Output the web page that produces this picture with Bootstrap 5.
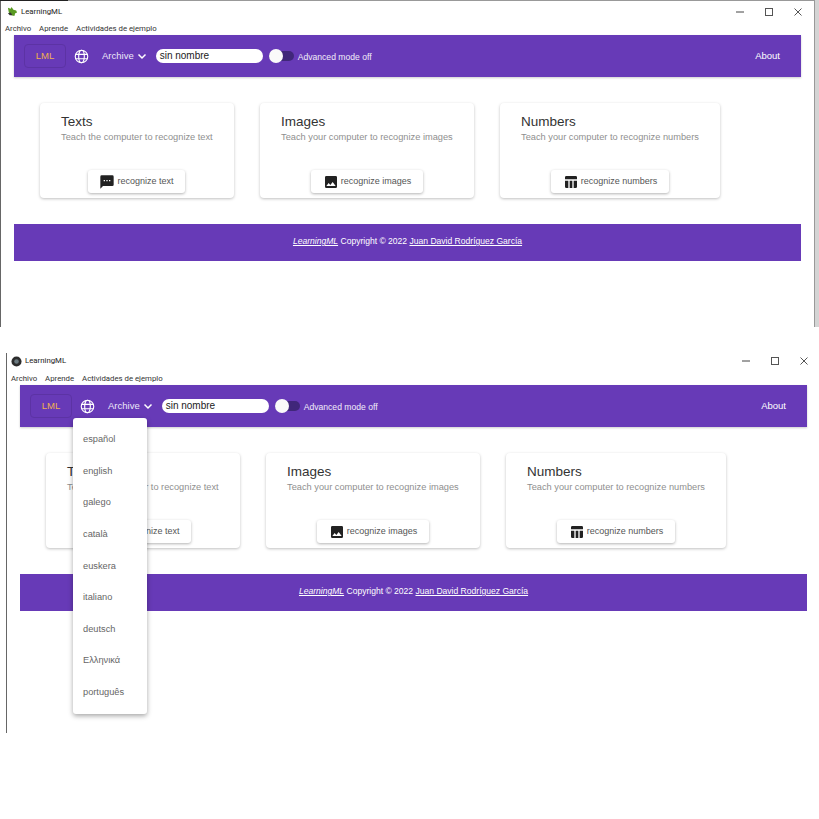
<!DOCTYPE html>
<html lang="en">
<head>
    <meta charset="UTF-8">
    <title>LearningML</title>
    <link href="https://cdn.jsdelivr.net/npm/bootstrap@5.3.0/dist/css/bootstrap.min.css" rel="stylesheet">
    <style>
        body { background: #fff; font-family: "Liberation Sans", Arial, sans-serif; }
        .app-window { position: absolute; background: #fff; width: 813px; }
        .win-first { left: 0; top: 0; height: 327px; width: 815px; border-left: 1px solid #666; border-top: 1px solid #999; border-right: 1px solid #999; box-shadow: 4px 0 0 #d4d4d4; }
        .win-first::before { content: ""; position: absolute; left: -1px; top: -1px; width: 68px; height: 1px; background: #222; }
        .win-second { left: 6px; top: 350px; height: 383px; border-left: 1px solid #666; }
        .win-second::before { content: ""; position: absolute; left: -1px; top: 0; width: 1px; height: 3px; background: #fff; }
        .win-title { height: 22px; padding-left: 4px; font-family: Roboto, sans-serif; font-size: 7.8px; color: #222; }
        .win-first .win-title { height: 21px; padding-left: 6px; }
        .win-icons { gap: 3px; }
        .win-controls { gap: 19px; margin-right: 10px; }
        .win-first .win-controls { margin-right: 11px; }
        .win-menu { height: 13px; padding-left: 4px; gap: 8px; font-family: Roboto, sans-serif; font-size: 7.8px; line-height: 13px; color: #333; }
        .app-bar { margin-left: 13px; width: 787px; height: 42px; background: #673ab7; color: #fff; box-shadow: 0 1px 2px rgba(0,0,0,.2); padding-left: 10px; padding-right: 21px; font-size: 9.5px; }
        .lml-btn { width: 42px; height: 24px; border: 1px solid #5c33a4; border-radius: 4px; color: #f0b04f; font-size: 9.5px; line-height: 22px; text-align: center; margin-right: 8px; }
        .bar-archive { margin-left: 13px; margin-right: 9px; gap: 3px; color: #ece6f7; }
        .name-field { width: 107px; height: 14px; border-radius: 7px; background: #fff; color: #222; font-size: 10px; line-height: 14px; padding-left: 4px; }
        .mode-switch { position: relative; width: 25px; height: 10px; border-radius: 5px; background: #40277a; margin-left: 6px; margin-right: 4px; }
        .mode-knob { position: absolute; left: 0; top: -2px; width: 14px; height: 14px; border-radius: 50%; background: #fafafa; }
        .mode-label { font-size: 8.6px; line-height: 12px; padding-top: 1px; color: #f1edf9; }
        .task-row { padding: 26px 0 0 39px; gap: 26px; }
        .task-card { height: 95px; background: #fff; border-radius: 4px; box-shadow: 0 1px 3px rgba(0,0,0,.25); padding: 11px 0 0 21px; position: relative; }
        .task-name { font-size: 13.5px; line-height: 16px; color: #333; }
        .task-text { font-size: 9.25px; line-height: 12px; margin-top: 1px; color: #8f8f8f; }
        .task-btn { position: absolute; bottom: 5px; height: 23px; border-radius: 3px; background: #fff; box-shadow: 0 1px 3px rgba(0,0,0,.3); font-size: 9px; color: #555; gap: 2px; }
        .bar-footer { margin: 26px 0 0 13px; width: 787px; height: 37px; background: #673ab7; color: #fff; font-size: 8.55px; text-align: center; line-height: 35px; }
        .bar-footer a { color: #fff; }
        .lang-menu { position: absolute; left: 66px; top: 68px; width: 74px; height: 296px; background: #fff; border-radius: 3px; box-shadow: 0 2px 5px rgba(0,0,0,.35); padding-top: 6px; z-index: 5; }
        .lang-item { height: 31.65px; line-height: 31px; padding-left: 10px; font-size: 9.25px; color: #666; }
    </style>
</head>
<body>

<!-- first window -->
<div class="app-window win-first">
    <div class="win-title d-flex align-items-center justify-content-between">
        <div class="win-icons d-flex align-items-center">
            <svg width="11" height="11" viewBox="0 0 12 12"><path d="M1 2l3 1 1-2 2 3 3 1 1 2-2 1-1 3-3-1-3-3z" fill="#5a9a22"/><path d="M1 8l3-1 2 3H3z" fill="#333"/></svg>
            <span>LearningML</span>
        </div>
        <div class="win-controls d-flex align-items-center">
            <svg width="10" height="10" viewBox="0 0 10 10"><path d="M1 5h8" stroke="#444"/></svg>
            <svg width="10" height="10" viewBox="0 0 10 10"><rect x="1.500" y="1.500" width="7" height="7" fill="none" stroke="#555"/></svg>
            <svg width="10" height="10" viewBox="0 0 10 10"><path d="M1.500 1.500l7 7m0-7l-7 7" stroke="#555"/></svg>
        </div>
    </div>
    <div class="win-menu d-flex"><span>Archivo</span><span>Aprende</span><span>Actividades de ejemplo</span></div>
    <div class="app-bar d-flex align-items-center">
        <div class="lml-btn">LML</div>
        <svg width="15" height="15" viewBox="0 0 24 24" fill="none" stroke="#fff" stroke-width="1.800"><circle cx="12" cy="12" r="10"/><ellipse cx="12" cy="12" rx="4.500" ry="10"/><path d="M2.500 8.500h19M2.500 15.500h19"/></svg>
        <div class="bar-archive d-flex align-items-center">Archive
            <svg width="10" height="10" viewBox="0 0 10 10" fill="none" stroke="#fff" stroke-width="1.500"><path d="M1.500 3.500L5 7l3.500-3.500"/></svg>
        </div>
        <div class="name-field">sin nombre</div>
        <div class="mode-switch"><div class="mode-knob"></div></div>
        <div class="mode-label">Advanced mode off</div>
        <div class="ms-auto">About</div>
    </div>
    <div class="task-row d-flex">
        <div class="task-card" style="width: 194px">
            <div class="task-name">Texts</div>
            <div class="task-text">Teach the computer to recognize text</div>
            <div class="task-btn d-flex align-items-center justify-content-center" style="left: 48px; width: 97px">
                <svg width="16" height="16" viewBox="0 0 24 24"><path d="M20 2H4a2 2 0 0 0-2 2v18l4-4h14a2 2 0 0 0 2-2V4a2 2 0 0 0-2-2zM9 11H7V9h2zm4 0h-2V9h2zm4 0h-2V9h2z" fill="#222"/></svg>
                <span>recognize text</span>
            </div>
        </div>
        <div class="task-card" style="width: 214px">
            <div class="task-name">Images</div>
            <div class="task-text">Teach your computer to recognize images</div>
            <div class="task-btn d-flex align-items-center justify-content-center" style="left: 51px; width: 112px">
                <svg width="16" height="16" viewBox="0 0 24 24"><path d="M21 19V5a2 2 0 0 0-2-2H5a2 2 0 0 0-2 2v14a2 2 0 0 0 2 2h14a2 2 0 0 0 2-2zM8.500 13.500l2.500 3 3.500-4.500 4.500 6H5z" fill="#222"/></svg>
                <span>recognize images</span>
            </div>
        </div>
        <div class="task-card" style="width: 220px">
            <div class="task-name">Numbers</div>
            <div class="task-text">Teach your computer to recognize numbers</div>
            <div class="task-btn d-flex align-items-center justify-content-center" style="left: 51px; width: 118px">
                <svg width="16" height="16" viewBox="0 0 24 24"><path d="M10 10h4v11h-4zM16 21h3a2 2 0 0 0 2-2v-9h-5zM3 10v9a2 2 0 0 0 2 2h3V10zM21 8V5a2 2 0 0 0-2-2H5a2 2 0 0 0-2 2v3z" fill="#222"/></svg>
                <span>recognize numbers</span>
            </div>
        </div>
    </div>
    <div class="bar-footer"><a href="#"><em>LearningML</em></a> Copyright © 2022 <a href="#">Juan David Rodríguez García</a></div>
</div>

<!-- second window, with the language menu open -->
<div class="app-window win-second">
    <div class="win-title d-flex align-items-center justify-content-between">
        <div class="win-icons d-flex align-items-center">
            <svg width="11" height="11" viewBox="0 0 12 12"><circle cx="6" cy="6" r="5.500" fill="#2c2c2c"/><circle cx="6" cy="6" r="2.500" fill="#6b7a80"/></svg>
            <span>LearningML</span>
        </div>
        <div class="win-controls d-flex align-items-center">
            <svg width="10" height="10" viewBox="0 0 10 10"><path d="M1 5h8" stroke="#444"/></svg>
            <svg width="10" height="10" viewBox="0 0 10 10"><rect x="1.500" y="1.500" width="7" height="7" fill="none" stroke="#555"/></svg>
            <svg width="10" height="10" viewBox="0 0 10 10"><path d="M1.500 1.500l7 7m0-7l-7 7" stroke="#555"/></svg>
        </div>
    </div>
    <div class="win-menu d-flex"><span>Archivo</span><span>Aprende</span><span>Actividades de ejemplo</span></div>
    <div class="app-bar d-flex align-items-center">
        <div class="lml-btn">LML</div>
        <svg width="15" height="15" viewBox="0 0 24 24" fill="none" stroke="#fff" stroke-width="1.800"><circle cx="12" cy="12" r="10"/><ellipse cx="12" cy="12" rx="4.500" ry="10"/><path d="M2.500 8.500h19M2.500 15.500h19"/></svg>
        <div class="bar-archive d-flex align-items-center">Archive
            <svg width="10" height="10" viewBox="0 0 10 10" fill="none" stroke="#fff" stroke-width="1.500"><path d="M1.500 3.500L5 7l3.500-3.500"/></svg>
        </div>
        <div class="name-field">sin nombre</div>
        <div class="mode-switch"><div class="mode-knob"></div></div>
        <div class="mode-label">Advanced mode off</div>
        <div class="ms-auto">About</div>
    </div>
    <div class="lang-menu">
        <div class="lang-item">español</div>
        <div class="lang-item">english</div>
        <div class="lang-item">galego</div>
        <div class="lang-item">català</div>
        <div class="lang-item">euskera</div>
        <div class="lang-item">italiano</div>
        <div class="lang-item">deutsch</div>
        <div class="lang-item">Ελληνικά</div>
        <div class="lang-item">português</div>
    </div>
    <div class="task-row d-flex">
        <div class="task-card" style="width: 194px">
            <div class="task-name">Texts</div>
            <div class="task-text">Teach the computer to recognize text</div>
            <div class="task-btn d-flex align-items-center justify-content-center" style="left: 48px; width: 97px">
                <svg width="16" height="16" viewBox="0 0 24 24"><path d="M20 2H4a2 2 0 0 0-2 2v18l4-4h14a2 2 0 0 0 2-2V4a2 2 0 0 0-2-2zM9 11H7V9h2zm4 0h-2V9h2zm4 0h-2V9h2z" fill="#222"/></svg>
                <span>recognize text</span>
            </div>
        </div>
        <div class="task-card" style="width: 214px">
            <div class="task-name">Images</div>
            <div class="task-text">Teach your computer to recognize images</div>
            <div class="task-btn d-flex align-items-center justify-content-center" style="left: 51px; width: 112px">
                <svg width="16" height="16" viewBox="0 0 24 24"><path d="M21 19V5a2 2 0 0 0-2-2H5a2 2 0 0 0-2 2v14a2 2 0 0 0 2 2h14a2 2 0 0 0 2-2zM8.500 13.500l2.500 3 3.500-4.500 4.500 6H5z" fill="#222"/></svg>
                <span>recognize images</span>
            </div>
        </div>
        <div class="task-card" style="width: 220px">
            <div class="task-name">Numbers</div>
            <div class="task-text">Teach your computer to recognize numbers</div>
            <div class="task-btn d-flex align-items-center justify-content-center" style="left: 51px; width: 118px">
                <svg width="16" height="16" viewBox="0 0 24 24"><path d="M10 10h4v11h-4zM16 21h3a2 2 0 0 0 2-2v-9h-5zM3 10v9a2 2 0 0 0 2 2h3V10zM21 8V5a2 2 0 0 0-2-2H5a2 2 0 0 0-2 2v3z" fill="#222"/></svg>
                <span>recognize numbers</span>
            </div>
        </div>
    </div>
    <div class="bar-footer"><a href="#"><em>LearningML</em></a> Copyright © 2022 <a href="#">Juan David Rodríguez García</a></div>
</div>

<script src="https://cdn.jsdelivr.net/npm/bootstrap@5.3.0/dist/js/bootstrap.bundle.min.js"></script>
</body>
</html>
